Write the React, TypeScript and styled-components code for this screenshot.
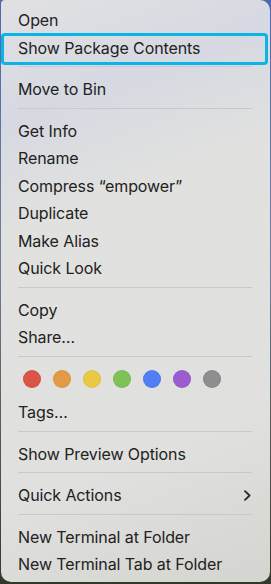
import React from 'react';
import styled, { createGlobalStyle } from 'styled-components';

const GlobalStyle = createGlobalStyle`
  html, body {
    margin: 0;
    padding: 0;
  }
  body {
    width: 271px;
    height: 584px;
    overflow: hidden;
    background: linear-gradient(180deg, #4f68ad 0%, #6f7f9c 45%, #545a52 75%, #2f3a28 100%);
    font-family: Inter, "Noto Sans", "Liberation Sans", sans-serif;
  }
`;

const Menu = styled.div`
  width: 269px;
  height: 582px;
  box-sizing: border-box;
  margin-left: 1px;
  padding: 6.25px 0 4px;
  border-radius: 4px 10px 10px 10px;
  background: linear-gradient(160deg, #e1e1e3 0%, #d6d9e2 18%, #e1e1df 35%, #e0e0de 75%, #d4d5d1 100%);
  color: #222222;
  display: flex;
  flex-direction: column;
`;

const Item = styled.div<{ $selected?: boolean }>`
  position: relative;
  height: 27.5px;
  flex: none;
  padding: 0 18px 0 17px;
  display: flex;
  align-items: center;
  justify-content: space-between;
  font-size: 16px;
  letter-spacing: -0.1px;
  white-space: nowrap;

  ${p => p.$selected && `
    &::after {
      content: '';
      position: absolute;
      top: -1px;
      bottom: -4px;
      left: 0;
      right: 2px;
      border: 3px solid #0ab4e4;
      border-radius: 4px;
    }
  `}
`;

const Separator = styled.div`
  flex: none;
  height: 14px;
  padding: 5px 18px 8px 17px;
  box-sizing: border-box;

  &::before {
    content: '';
    display: block;
    height: 1px;
    background: #c9c9c9;
  }
`;

const TagRow = styled.div`
  flex: none;
  height: 33.5px;
  box-sizing: border-box;
  padding: 5px 0 0 22px;
  display: flex;
  gap: 12px;
`;

const Dot = styled.span<{ $color: string }>`
  width: 18px;
  height: 18px;
  border-radius: 50%;
  background: ${p => p.$color};
  box-shadow: inset 0 0 0 1px rgba(0, 0, 0, 0.06);
`;

const Chevron = () => (
  <svg width="9" height="11" viewBox="0 0 9 11" fill="none">
    <path d="M2 1.2 L6.6 5.5 L2 9.8" stroke="#2a2a2a" strokeWidth="1.8" strokeLinecap="round" strokeLinejoin="round" />
  </svg>
);

const tagColors = ['#da5448', '#e39a44', '#ebc944', '#7dc257', '#4f7ef5', '#9b5ccf', '#8e8e91'];

export default function App() {
  return (
    <>
      <GlobalStyle />
      <Menu>
        <Item>Open</Item>
        <Item $selected>Show Package Contents</Item>
        <Separator />
        <Item>Move to Bin</Item>
        <Separator />
        <Item>Get Info</Item>
        <Item>Rename</Item>
        <Item>Compress “empower”</Item>
        <Item>Duplicate</Item>
        <Item>Make Alias</Item>
        <Item>Quick Look</Item>
        <Separator />
        <Item>Copy</Item>
        <Item>Share…</Item>
        <Separator />
        <TagRow>
          {tagColors.map(c => (
            <Dot key={c} $color={c} />
          ))}
        </TagRow>
        <Item>Tags…</Item>
        <Separator />
        <Item>Show Preview Options</Item>
        <Separator />
        <Item>
          Quick Actions
          <Chevron />
        </Item>
        <Separator />
        <Item>New Terminal at Folder</Item>
        <Item>New Terminal Tab at Folder</Item>
      </Menu>
    </>
  );
}
